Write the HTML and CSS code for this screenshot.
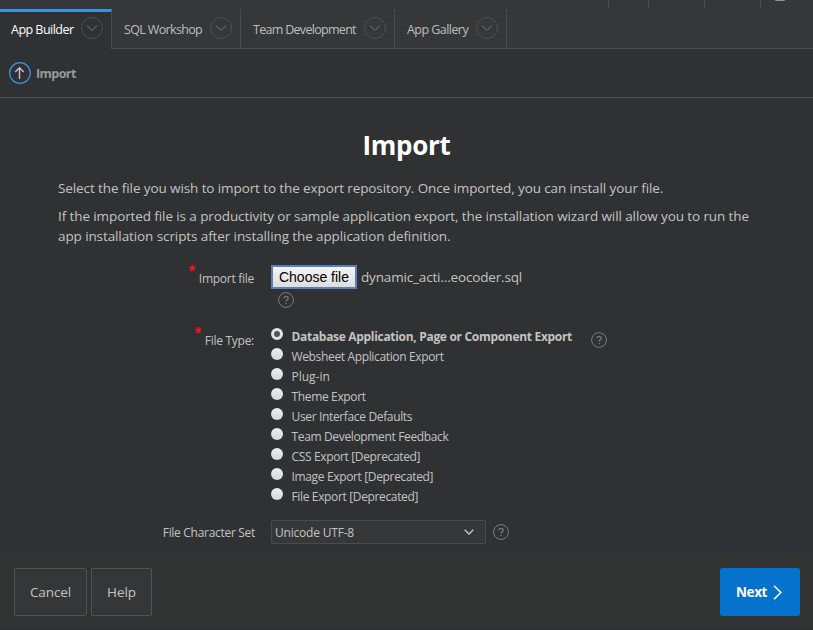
FILE: index.html
```html
<!DOCTYPE html>
<html lang="en">
<head>
<meta charset="utf-8">
<title>Import</title>
<link rel="stylesheet" href="styles.css">
</head>
<body>
<svg class="defs" width="0" height="0" aria-hidden="true">
  <symbol id="chevron" viewBox="0 0 22 22"><circle cx="11" cy="11" r="10.5" stroke="#4d4e50"/><path d="M6 8.5l5 5 5-5" stroke="#77797b"/></symbol>
  <symbol id="help" viewBox="0 0 16 16"><circle cx="8" cy="8" r="7.4"/><path d="M6 6.3c0-2.6 4.2-2.6 4.2 0C10.200 7.700 8.100 7.700 8.100 9.500" stroke-width="1.300"/><path d="M8.100 10.900v1.300" stroke-width="1.400"/></symbol>
</svg>
<header class="topbar"><i class="cell"></i><i class="cell search"></i><i class="cell admin"></i><i class="cell user"></i><i class="avatar"></i></header>
<nav class="tabs">
  <a class="tab active"><span class="t1">App Builder</span><svg class="chev"><use href="#chevron"/></svg></a>
  <a class="tab sql"><span class="t2">SQL Workshop</span><svg class="chev"><use href="#chevron"/></svg></a>
  <a class="tab team"><span class="t3">Team Development</span><svg class="chev"><use href="#chevron"/></svg></a>
  <a class="tab gallery"><span class="t4">App Gallery</span><svg class="chev"><use href="#chevron"/></svg></a>
</nav>
<div class="crumbs">
  <svg class="up" viewBox="0 0 22 22"><circle cx="11" cy="11" r="10.300" stroke="#3a93e0" stroke-width="1.200"/><path d="M10.500 17V6.200M6.200 10l4.300-4.200 4.300 4.200" stroke="#c4bfc8" stroke-width="1.400"/></svg>
  <span>Import</span>
</div>
<main>
  <h1>Import</h1>
  <p class="intro">Select the file you wish to import to the export repository. Once imported, you can install your file.</p>
  <p class="note"><span>If the imported file is a productivity or sample application export, the installation wizard will allow you to run the</span><br><span class="note2">app installation scripts after installing the application definition.</span></p>
  <form class="form">
    <div class="row file">
      <label class="label"><b>*</b><span>Import file</span></label>
      <div><div class="picker"><button type="button" class="choose">Choose file</button><span class="name">dynamic_acti...eocoder.sql</span></div><svg class="help"><use href="#help"/></svg></div>
    </div>
    <div class="row type">
      <label class="label"><b>*</b><span>File Type:</span></label>
      <div class="options">
        <label class="selected"><i class="radio on"></i><span>Database Application, Page or Component Export</span></label>
        <label><i class="radio"></i><span>Websheet Application Export</span></label>
        <label class="plugin"><i class="radio"></i><span>Plug-in</span></label>
        <label><i class="radio"></i><span>Theme Export</span></label>
        <label><i class="radio"></i><span>User Interface Defaults</span></label>
        <label><i class="radio"></i><span>Team Development Feedback</span></label>
        <label><i class="radio"></i><span>CSS Export [Deprecated]</span></label>
        <label><i class="radio"></i><span>Image Export [Deprecated]</span></label>
        <label><i class="radio"></i><span>File Export [Deprecated]</span></label>
      </div>
      <svg class="help"><use href="#help"/></svg>
    </div>
    <div class="row charset">
      <label class="label"><span>File Character Set</span></label>
      <div class="select"><span>Unicode UTF-8</span><svg viewBox="0 0 10 6"><path d="M.7.7L5 5 9.300.7" stroke="#c8c8c8" stroke-width="1.300"/></svg></div>
      <svg class="help"><use href="#help"/></svg>
    </div>
  </form>
</main>
<footer>
  <button class="btn cancel">Cancel</button><button class="btn helpbtn">Help</button>
  <button class="btn next"><span>Next</span><svg viewBox="0 0 9 15"><path d="M1 .8l6.800 6.700L1 14.200" stroke="#fff" stroke-width="1.500"/></svg></button>
</footer>
</body>
</html>
```
FILE: styles.css
```css
* { box-sizing: border-box; }
body { margin: 0; height: 630px; overflow: hidden; display: flex; flex-direction: column; background: #303133; color: #c3c3c3; font: 12px/20px "Open Sans", sans-serif; }
svg { fill: none; flex: none; display: block; }
.defs { position: absolute; }
.topbar { display: flex; height: 9px; flex: none; background: #363739; padding-left: 608px; }
.cell { width: 40px; height: 9px; border-left: 1px solid #4b4c4e; }
.search, .admin { width: 56px; }
.user { width: 15px; }
.avatar { width: 10px; height: 1px; background: #939495; border-radius: 0 0 5px 5px; }
.tabs { display: flex; flex: none; height: 40px; background: #363739; border-bottom: 1px solid #4b4c4e; }
.tab { display: flex; height: 39px; justify-content: space-between; padding: 8px 8px 0 12px; border-right: 1px solid #4b4c4e; font-size: 12.500px; line-height: 25px; white-space: nowrap; color: #bdbebf; }
.active { width: 112px; height: 40px; padding: 5px 8px 0 11px; border-top: 3px solid #3a93e0; background: #303133; color: #fff; }
.sql { width: 129px; }
.team { width: 154px; }
.gallery { width: 112px; }
.chev { width: 22px; height: 22px; }
.t1 { letter-spacing: -.52px; }
.t2 { letter-spacing: -.65px; }
.t3 { letter-spacing: -.7px; }
.t4 { letter-spacing: -.55px; }
.crumbs { display: flex; flex: none; height: 49px; padding: 13px 9px 0; border-bottom: 1px solid #4b4c4e; font-size: 12.500px; line-height: 23px; font-weight: 700; letter-spacing: -.55px; color: #98999a; gap: 5px; }
.up { width: 22px; height: 22px; }
main { flex: none; height: 454px; padding: 30px 58px 0; }
h1 { margin: 0 0 15px; font-size: 26px; line-height: 35px; height: 35px; font-weight: 700; letter-spacing: -.3px; text-align: center; color: #fff; }
p { margin: 0 0 8px; font-size: 13.500px; line-height: 20px; white-space: nowrap; letter-spacing: -.1px; }
.note { margin-bottom: 19px; }
.row { display: flex; }
.label { display: flex; justify-content: flex-end; width: 197px; margin-right: 16px; flex: none; white-space: nowrap; letter-spacing: -.3px; }
.label b { color: #f51515; font: 700 16px/16px "Liberation Sans", sans-serif; margin-right: 4px; }
.file { height: 62px; }
.file .label, .type .label { padding-right: 1px; letter-spacing: -.27px; }
.file .label span { margin-top: 4px; }
.label b { margin-top: -1px; }
.picker { display: flex; height: 24px; }
.choose { width: 86px; height: 24px; padding: 0; border: 2px solid #5b7fbd; background: linear-gradient(#f4f4f4, #dedede); color: #000; font: 14px/18px "Liberation Sans", sans-serif; }
.name { font-size: 13.500px; line-height: 24px; margin-left: 4px; letter-spacing: -.16px; }
.help { width: 16px; height: 16px; stroke: #7b7c7d; }
.file .help { margin: 3px 0 0 7px; }
.type { height: 193px; }
.type .label span { margin-top: 4px; }
.options label { display: flex; height: 20px; line-height: 20px; white-space: nowrap; }
.radio { width: 12px; height: 12px; margin: 1px 8.500px 0 0; border-radius: 50%; background: linear-gradient(#eee, #d8d8d8); }
.radio.on { border: 3px solid #e4e4e4; background: #555; }
.options label span { letter-spacing: -.35px; }
.options { width: 320px; }
.selected { font-weight: 700; }
.options .selected span { letter-spacing: -.31px; }
.options .plugin span { letter-spacing: 0; }
.type .help { margin-top: 5px; }
.charset { height: 24px; }
.charset .label { line-height: 26px; }
.select { width: 215px; height: 24px; display: flex; align-items: center; justify-content: space-between; padding: 0 11px 0 3px; border: 1px solid #4b4c4e; border-radius: 2px; background: #363739; margin-right: 7px; letter-spacing: -.2px; }
.select span { padding-top: 2px; }
.select svg { width: 10px; height: 6px; }
.charset .help { margin-top: 4px; }
footer { flex: 1; display: flex; align-items: flex-start; padding: 16px 13px 0 14px; background: #323433; border-bottom: 1px solid #2d2d30; }
.btn { display: flex; align-items: center; justify-content: center; height: 48px; padding: 0; border: 1px solid #515351; border-radius: 2px; background: #353638; color: #c3c3c3; font: 13.500px/20px "Open Sans", sans-serif; letter-spacing: -.1px; }
.cancel { width: 73px; margin-right: 4px; }
.helpbtn { width: 61px; }
.next { width: 80px; margin-left: auto; padding-right: 2px; background: #0572ce; border-color: #0572ce; color: #fff; font-weight: 700; gap: 6px; letter-spacing: -.35px; }
.next svg { width: 9px; height: 15px; }
```
